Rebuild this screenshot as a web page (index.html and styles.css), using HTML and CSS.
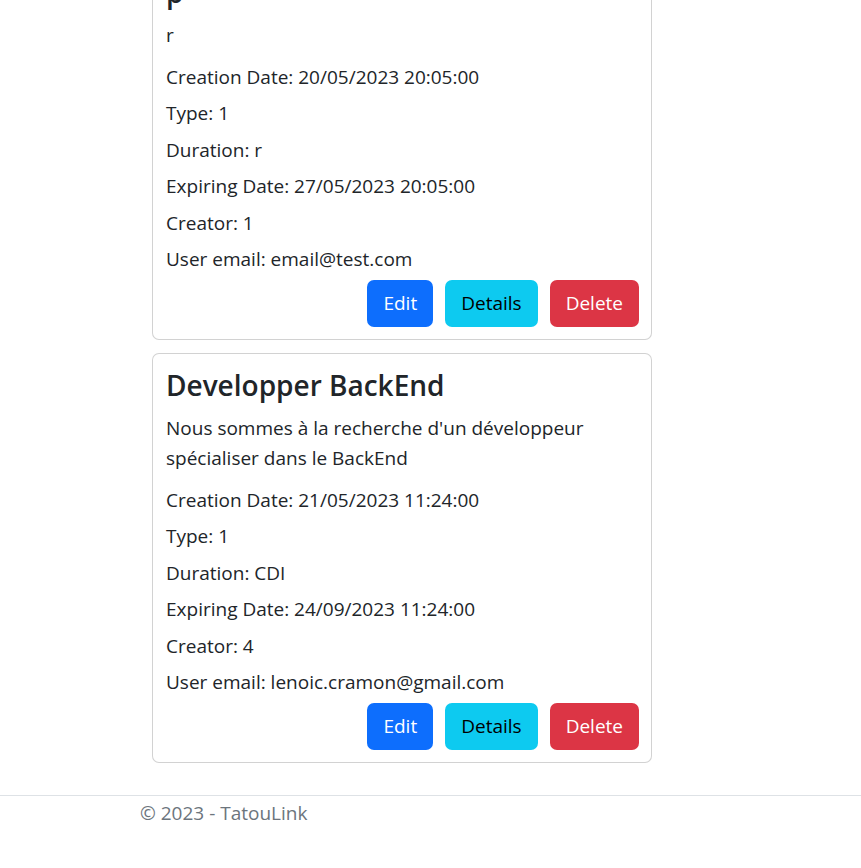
FILE: index.html
```html
<!DOCTYPE html>
<html lang="fr">
<head>
<meta charset="utf-8">
<title>TatouLink</title>
<link rel="stylesheet" href="styles.css">
</head>
<body>
<main class="container">
  <div class="cards">
    <div class="card">
      <div class="card-body">
        <h5 class="card-title">p</h5>
        <p class="card-desc">r</p>
        <p class="card-text">Creation Date: 20/05/2023 20:05:00</p>
        <p class="card-text">Type: 1</p>
        <p class="card-text">Duration: r</p>
        <p class="card-text">Expiring Date: 27/05/2023 20:05:00</p>
        <p class="card-text">Creator: 1</p>
        <p class="card-text">User email: email@test.com</p>
        <div class="actions">
          <a class="btn btn-primary" href="#">Edit</a>
          <a class="btn btn-info" href="#">Details</a>
          <a class="btn btn-danger" href="#">Delete</a>
        </div>
      </div>
    </div>
    <div class="card">
      <div class="card-body">
        <h5 class="card-title">Developper BackEnd</h5>
        <p class="card-desc">Nous sommes à la recherche d'un développeur spécialiser dans le BackEnd</p>
        <p class="card-text">Creation Date: 21/05/2023 11:24:00</p>
        <p class="card-text">Type: 1</p>
        <p class="card-text">Duration: CDI</p>
        <p class="card-text">Expiring Date: 24/09/2023 11:24:00</p>
        <p class="card-text">Creator: 4</p>
        <p class="card-text">User email: lenoic.cramon@gmail.com</p>
        <div class="actions">
          <a class="btn btn-primary" href="#">Edit</a>
          <a class="btn btn-info" href="#">Details</a>
          <a class="btn btn-danger" href="#">Delete</a>
        </div>
      </div>
    </div>
  </div>
</main>
<footer class="footer">
  <div class="footer-inner">© 2023 - TatouLink</div>
</footer>
</body>
</html>
```

FILE: styles.css
```css
* { box-sizing: border-box; }
html, body { margin: 0; padding: 0; background: #fff; }
body {
  font-family: "Open Sans", "Noto Sans", "DejaVu Sans", sans-serif;
  font-size: 19px;
  line-height: 30px;
  color: #212529;
  overflow: hidden;
}
.container {
  padding-left: 152px;
  margin-top: -40px;
}
.cards {
  width: 500px;
  display: flex;
  flex-direction: column;
  gap: 13px;
}
.card {
  border: 1px solid rgba(0, 0, 0, 0.175);
  border-radius: 7px;
  background: #fff;
}
.card-body {
  padding: 16px 12px 12px 13px;
}
.card-title {
  margin: 0 0 13px;
  font-size: 28px;
  line-height: 30px;
  font-weight: 600;
}
.card-desc {
  margin: 0 0 12px;
}
.card-text {
  margin: 0 0 6.4px;
}
.actions {
  display: flex;
  justify-content: flex-end;
  gap: 12px;
  margin-top: -0.4px;
}
.btn {
  display: inline-block;
  padding: 7.5px 15px;
  border: 1px solid transparent;
  border-radius: 7px;
  font-size: 19px;
  line-height: 30px;
  text-decoration: none;
}
.btn-primary { background: #0d6efd; color: #fff; }
.btn-info { background: #0dcaf0; color: #000; }
.btn-danger { background: #dc3545; color: #fff; }
.footer {
  margin-top: 32px;
  border-top: 1px solid #dee2e6;
}
.footer-inner {
  padding-left: 140px;
  padding-top: 2px;
  color: #6c757d;
  line-height: 30px;
}
```
